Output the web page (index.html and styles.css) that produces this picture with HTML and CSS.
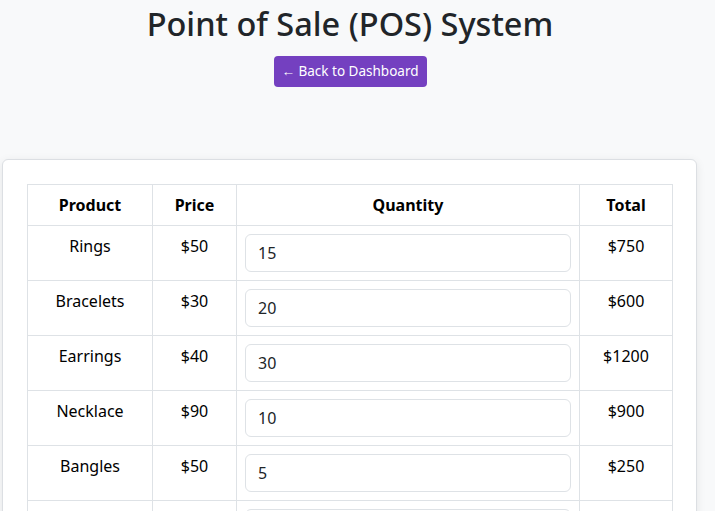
FILE: index.html
```html
<!DOCTYPE html>
<html lang="en">
<head>
<meta charset="utf-8">
<title>Point of Sale (POS) System</title>
<link rel="stylesheet" href="styles.css">
</head>
<body>
<div class="page">
  <header class="header">
    <h1 class="title">Point of Sale (POS) System</h1>
    <a class="btn-back" href="#">&larr; Back to Dashboard</a>
  </header>
  <section class="card">
    <table class="pos-table">
      <colgroup>
        <col class="col-product">
        <col class="col-price">
        <col class="col-qty">
        <col class="col-total">
      </colgroup>
      <thead>
        <tr>
          <th>Product</th>
          <th>Price</th>
          <th>Quantity</th>
          <th>Total</th>
        </tr>
      </thead>
      <tbody>
        <tr><td>Rings</td><td>$50</td><td><input class="qty" type="number" value="15"></td><td>$750</td></tr>
        <tr><td>Bracelets</td><td>$30</td><td><input class="qty" type="number" value="20"></td><td>$600</td></tr>
        <tr><td>Earrings</td><td>$40</td><td><input class="qty" type="number" value="30"></td><td>$1200</td></tr>
        <tr><td>Necklace</td><td>$90</td><td><input class="qty" type="number" value="10"></td><td>$900</td></tr>
        <tr><td>Bangles</td><td>$50</td><td><input class="qty" type="number" value="5"></td><td>$250</td></tr>
        <tr><td>Anklets</td><td>$20</td><td><input class="qty" type="number" value="12"></td><td>$240</td></tr>
      </tbody>
    </table>
  </section>
</div>
</body>
</html>
```

FILE: styles.css
```css
html, body {
  margin: 0;
  padding: 0;
  background: #f8f9fa;
}
body {
  font-family: "Noto Sans", "Open Sans", sans-serif;
  font-size: 16px;
  line-height: 1.5;
  color: #212529;
  overflow: hidden;
}
.page {
  width: 700px;
}
.header {
  display: flex;
  flex-direction: column;
  align-items: center;
  padding-top: 4px;
}
.title {
  margin: 0;
  font-size: 32.5px;
  font-weight: 500;
  line-height: 1.2;
  color: #212529;
}
.btn-back {
  margin-top: 13px;
  display: inline-block;
  background: #7440c0;
  color: #fff;
  font-size: 13.5px;
  line-height: 21px;
  padding: 5px 8px;
  border-radius: 4px;
  text-decoration: none;
}
.card {
  margin: 72px 3px 0 2px;
  background: #fff;
  border: 1px solid #dcdfe3;
  border-radius: 6px;
  box-shadow: 0 2px 10px rgba(0,0,0,0.08);
  padding: 24px;
}
.pos-table {
  width: 100%;
  table-layout: fixed;
  border-collapse: collapse;
  text-align: center;
  color: #000;
}
.col-product { width: 125px; }
.col-price { width: 84px; }
.col-qty { width: 343px; }
.col-total { width: 93px; }
.pos-table th,
.pos-table td {
  border: 1px solid #dee2e6;
  padding: 8px;
  vertical-align: top;
}
.pos-table th {
  font-weight: 700;
}
.qty {
  display: block;
  box-sizing: border-box;
  width: 100%;
  height: 38px;
  padding: 6px 12px;
  font-family: inherit;
  font-size: 16px;
  color: #212529;
  background: #fff;
  border: 1px solid #dee2e6;
  border-radius: 6px;
  text-align: left;
  -moz-appearance: textfield;
}
.qty::-webkit-outer-spin-button,
.qty::-webkit-inner-spin-button {
  -webkit-appearance: none;
  margin: 0;
}
```
